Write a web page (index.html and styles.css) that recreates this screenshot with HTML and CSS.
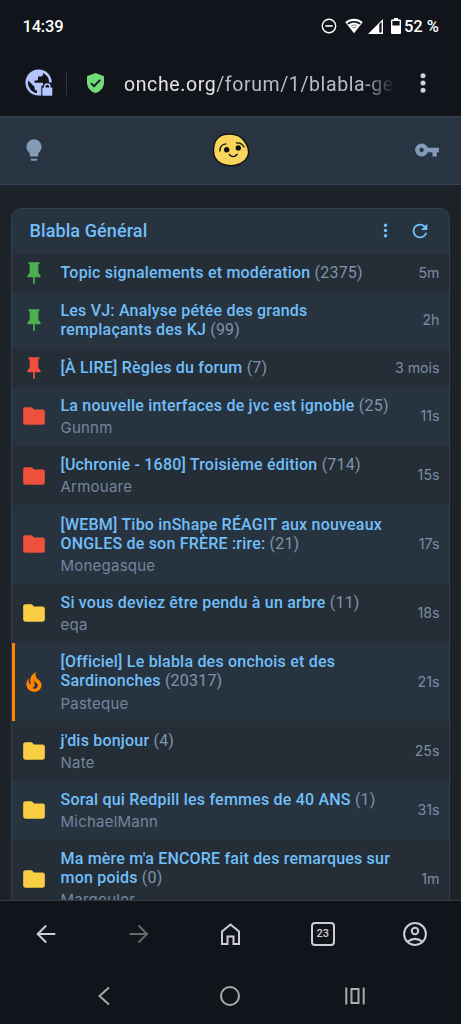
FILE: index.html
```
<!DOCTYPE html>
<html lang="fr">
<head>
<meta charset="utf-8">
<title>Blabla Général</title>
<link rel="stylesheet" href="styles.css">
</head>
<body>
<svg class="defs" width="0" height="0" aria-hidden="true">
  <symbol id="pin" viewBox="0 0 24 24"><path d="M16,12V4H17V2H7V4H8V12L6,14V16H11.2V22H12.8V16H18V14L16,12Z"/></symbol>
  <symbol id="folder" viewBox="0 0 24 24"><path d="M10,4H4C2.89,4 2,4.89 2,6V18A2,2 0 0,0 4,20H20A2,2 0 0,0 22,18V8C22,6.89 21.1,6 20,6H12L10,4Z"/></symbol>
  <symbol id="fire" viewBox="0 0 24 24"><path d="M17.66 11.2C17.43 10.9 17.15 10.64 16.89 10.38C16.22 9.78 15.46 9.35 14.82 8.72C13.33 7.26 13 4.85 13.95 3C13 3.23 12.17 3.75 11.46 4.32C8.87 6.4 7.85 10.07 9.07 13.22C9.11 13.32 9.15 13.42 9.15 13.55C9.15 13.77 9 13.97 8.8 14.05C8.57 14.15 8.33 14.09 8.14 13.93C8.08 13.88 8.04 13.83 8 13.76C6.87 12.33 6.69 10.28 7.45 8.64C5.78 10 4.87 12.3 5 14.47C5.06 14.97 5.12 15.47 5.29 15.97C5.43 16.57 5.7 17.17 6 17.7C7.08 19.43 8.95 20.67 10.96 20.92C13.1 21.19 15.39 20.8 17.03 19.32C18.86 17.66 19.5 15 18.56 12.72L18.43 12.46C18.22 12 17.66 11.2 17.66 11.2M14.5 17.5C14.22 17.74 13.76 18 13.4 18.1C12.28 18.5 11.16 17.94 10.5 17.28C11.69 17 12.4 16.12 12.61 15.23C12.78 14.43 12.46 13.77 12.33 13C12.21 12.26 12.23 11.63 12.5 10.94C12.69 11.32 12.89 11.7 13.13 12C13.9 13 15.11 13.44 15.37 14.8C15.41 14.94 15.43 15.08 15.43 15.23C15.46 16.05 15.1 16.95 14.5 17.5Z"/></symbol>
</svg>

<header class="status">
  <span class="clock">14:39</span>
  <span class="status-icons">
    <svg class="dnd" viewBox="0 0 16 16"><circle cx="8" cy="8" r="6.7" fill="none" stroke="#fff" stroke-width="1.4"/><path d="M4.3 8h7.4" stroke="#fff" stroke-width="1.6"/></svg>
    <svg class="wifi" viewBox="0 0 18 16"><path d="M0.2 4.1C5.3-.5 12.700-.5 17.800 4.100L9 15.200Z" fill="#fff"/><path d="M2.200 5C6 2.200 12 2.200 15.800 5L14.600 6.400C11 4.100 7 4.100 3.400 6.400Z" fill="#11141b"/><path d="M6 7.800Q9 6 12 7.800M7 9.600h4" stroke="#888" fill="none"/></svg>
    <svg class="signal" viewBox="0 0 15 15"><path d="M15 0V15H0Z" fill="#fff"/><path d="M11.300 5V13.600H13.600V3Z" fill="#11141b"/></svg>
    <svg class="battery" viewBox="0 0 10 16"><path d="M3 0h4v1.500h2q1 0 1 1V15q0 1-1 1H1q-1 0-1-1V2.500q0-1 1-1h2Z" fill="#fff"/><path d="M1.400 3h7.200v4.500H1.400Z" fill="#11141b"/></svg>
  </span>
  <span class="percent">52 %</span>
</header>

<div class="urlbar">
  <svg class="globe" viewBox="0 0 28 28"><path fill="#b4c5ff" fill-rule="evenodd" d="M13.500.5A13 13 0 0 1 26.800 13.500H24.200A11 11 0 0 0 18 4.100V5Q18 7.500 15.500 7.500H13V10.200Q13 11.400 11.800 11.400H9.500V13.800H17Q18.200 13.800 18.200 15V16.500H16.500V26.600H13.500A13.050 13.050 0 0 1 13.500.5ZM3.200 11.500A11 11 0 0 0 12 24.300V21.500Q9.500 21.500 9.500 19V17.800Z"/><path fill="#b4c5ff" stroke="#11141b" stroke-width="1.600" paint-order="stroke" d="M18 18.500h1V17.600a3.300 3.300 0 0 1 6.600 0v.9h1q.7 0 .7.7v6.800q0 .8-.7.800H18q-.7 0-.7-.8v-6.800q0-.7.7-.7Zm2.500 0h3.600v-.9a1.800 1.800 0 0 0-3.600 0Z" fill-rule="evenodd"/></svg>
  <span class="divider"></span>
  <svg class="shield" viewBox="0 0 17 20"><path d="M8.500 0L16 2.700Q17 3 17 4V9.500C17 15 13 18.800 8.500 20C4 18.800 0 15 0 9.500V4Q0 3 1 2.700Z" fill="#6fdc78"/><path d="M4 10.200L7 13.200L13.200 6.800" fill="none" stroke="#11141b" stroke-width="1.800"/></svg>
  <span class="url"><b>onche.org</b>/forum/1/blabla-gen</span>
  <svg class="menu" viewBox="0 0 6 20"><g fill="#d2d2dc"><circle cx="3" cy="2.700" r="2.500"/><circle cx="3" cy="10" r="2.500"/><circle cx="3" cy="17.300" r="2.500"/></g></svg>
</div>

<main class="page">
  <nav class="topbar">
    <svg class="topicon" viewBox="0 0 24 24"><path d="M12,2A7,7 0 0,0 5,9C5,11.380 6.190,13.470 8,14.740V17A1,1 0 0,0 9,18H15A1,1 0 0,0 16,17V14.740C17.810,13.470 19,11.380 19,9A7,7 0 0,0 12,2M9,21A1,1 0 0,0 10,22H14A1,1 0 0,0 15,21V20H9V21Z"/></svg>
    <svg class="smiley" viewBox="0 0 38 34"><path d="M1.500 18C1.500 8.500 6 2.200 14 1.300C21 .5 28 2 32 7.500C35 11.500 37 15 36.500 20C36 26.500 29 31.500 23.500 32.300C18 33 14 32.500 10 31C4.500 28.500 1.500 24 1.500 18Z" fill="#f8d55b" stroke="#111" stroke-width="1.400"/><g fill="none" stroke="#111" stroke-width="1.300" stroke-linecap="round"><path d="M7.800 18Q8 11.200 14 10.800M24.500 10Q29.500 9.500 32 14M17.300 21.500Q21 26 25.300 21.300"/></g><circle cx="14.700" cy="16.800" r="2.700" fill="#111"/><circle cx="26.300" cy="14.900" r="2.700" fill="#111"/></svg>
    <svg class="topicon" viewBox="0 0 24 24"><path d="M7,14A2,2 0 0,1 5,12A2,2 0 0,1 7,10A2,2 0 0,1 9,12A2,2 0 0,1 7,14M12.650,10C11.830,7.670 9.610,6 7,6A6,6 0 0,0 1,12A6,6 0 0,0 7,18C9.610,18 11.830,16.330 12.650,14H17V18H21V14H23V10H12.650Z"/></svg>
  </nav>

  <section class="card">
    <div class="card-head">
      <h1>Blabla Général</h1>
      <svg class="dots" viewBox="0 0 24 24"><path d="M12,16A2,2 0 0,1 14,18A2,2 0 0,1 12,20A2,2 0 0,1 10,18A2,2 0 0,1 12,16M12,10A2,2 0 0,1 14,12A2,2 0 0,1 12,14A2,2 0 0,1 10,12A2,2 0 0,1 12,10M12,4A2,2 0 0,1 14,6A2,2 0 0,1 12,8A2,2 0 0,1 10,6A2,2 0 0,1 12,4Z"/></svg>
      <svg class="refresh" viewBox="0 0 24 24"><path d="M17.650,6.350C16.200,4.900 14.210,4 12,4A8,8 0 0,0 4,12A8,8 0 0,0 12,20C15.730,20 18.840,17.450 19.730,14H17.650C16.830,16.330 14.610,18 12,18A6,6 0 0,1 6,12A6,6 0 0,1 12,6C13.660,6 15.140,6.690 16.220,7.780L13,11H20V4L17.650,6.350Z"/></svg>
    </div>
    <div class="topic"><svg class="icon green"><use href="#pin"/></svg><div class="body"><div class="title">Topic signalements et modération <i>(2375)</i></div></div><time>5m</time></div>
    <div class="topic"><svg class="icon green"><use href="#pin"/></svg><div class="body"><div class="title">Les VJ: Analyse pétée des grands<br>remplaçants des KJ <i>(99)</i></div></div><time>2h</time></div>
    <div class="topic"><svg class="icon red"><use href="#pin"/></svg><div class="body"><div class="title">[À LIRE] Règles du forum <i>(7)</i></div></div><time>3 mois</time></div>
    <div class="topic"><svg class="icon red"><use href="#folder"/></svg><div class="body"><div class="title">La nouvelle interfaces de jvc est ignoble <i>(25)</i></div><div class="author">Gunnm</div></div><time>11s</time></div>
    <div class="topic"><svg class="icon red"><use href="#folder"/></svg><div class="body"><div class="title">[Uchronie - 1680] Troisième édition <i>(714)</i></div><div class="author">Armouare</div></div><time>15s</time></div>
    <div class="topic"><svg class="icon red"><use href="#folder"/></svg><div class="body"><div class="title">[WEBM] Tibo inShape RÉAGIT aux nouveaux<br>ONGLES de son FRÈRE :rire: <i>(21)</i></div><div class="author">Monegasque</div></div><time>17s</time></div>
    <div class="topic"><svg class="icon yellow"><use href="#folder"/></svg><div class="body"><div class="title">Si vous deviez être pendu à un arbre <i>(11)</i></div><div class="author">eqa</div></div><time>18s</time></div>
    <div class="topic hot"><svg class="icon orange"><use href="#fire"/></svg><div class="body"><div class="title">[Officiel] Le blabla des onchois et des<br>Sardinonches <i>(20317)</i></div><div class="author">Pasteque</div></div><time>21s</time></div>
    <div class="topic"><svg class="icon yellow"><use href="#folder"/></svg><div class="body"><div class="title">j'dis bonjour <i>(4)</i></div><div class="author">Nate</div></div><time>25s</time></div>
    <div class="topic"><svg class="icon yellow"><use href="#folder"/></svg><div class="body"><div class="title">Soral qui Redpill les femmes de 40 ANS <i>(1)</i></div><div class="author">MichaelMann</div></div><time>31s</time></div>
    <div class="topic"><svg class="icon yellow"><use href="#folder"/></svg><div class="body"><div class="title">Ma mère m'a ENCORE fait des remarques sur<br>mon poids <i>(0)</i></div><div class="author">Margouler</div></div><time>1m</time></div>
  </section>
</main>

<footer class="bottom">
  <div class="tools">
    <svg viewBox="0 0 28 28"><path d="M23.300 14H5.500M14.200 5.500L5.700 14L14.200 22.500"/></svg>
    <svg class="dim" viewBox="0 0 28 28"><path d="M5.500 14H23M14.500 5.500L23 14L14.500 22.500"/></svg>
    <svg viewBox="0 0 28 28"><path d="M5 24V11.500L13.500 4.500L22 11.500V24H16.500V16.500H10.500V24Z"/></svg>
    <span class="tabs">23</span>
    <svg viewBox="0 0 28 28"><circle cx="14" cy="14" r="10.900"/><circle cx="14" cy="11" r="3.200"/><path d="M6.500 21.800Q14 16 21.500 21.800"/></svg>
  </div>
  <div class="system">
    <svg viewBox="0 0 24 24"><path d="M17 3.500L7.500 12L17 20.500"/></svg>
    <svg viewBox="0 0 24 24"><circle cx="12" cy="12" r="9"/></svg>
    <svg viewBox="0 0 24 24"><path d="M3.300 3.500V20.500M20.700 3.500V20.500M8.500 5H15.500V19H8.500Z"/></svg>
  </div>
</footer>
</body>
</html>
```

FILE: styles.css
```
* { box-sizing: border-box; }
body {
  margin: 0;
  height: 1024px;
  overflow: hidden;
  display: flex;
  flex-direction: column;
  background: #11141b;
  font-family: Roboto, sans-serif;
  white-space: nowrap;
}
svg { display: block; flex: none; }
.defs { position: absolute; }

.status {
  height: 52px;
  flex: none;
  display: flex;
  align-items: center;
  padding: 0 22px 0 22.500px;
  color: #fff;
  font-size: 16.500px;
  font-weight: 500;
}
.clock { flex: 1; letter-spacing: -0.200px; }
.status-icons { display: flex; align-items: center; margin-right: 2.500px; }
.dnd { width: 16px; height: 16px; margin-right: 7.500px; }
.wifi { width: 18px; height: 16px; margin-right: 5.500px; }
.signal { width: 15px; height: 15px; margin-right: 8px; }
.battery { width: 10px; height: 16px; }

.urlbar {
  height: 64px;
  flex: none;
  display: flex;
  align-items: center;
  padding: 0 35.500px 2px 24.500px;
}
.globe { width: 28px; height: 28px; margin-right: 13.500px; }
.divider { width: 1px; height: 24px; background: #34373e; margin-right: 20px; }
.shield { width: 17px; height: 20px; margin-right: 20px; }
.url {
  width: 271px;
  padding-top: 2px;
  overflow: hidden;
  color: #bdbdc7;
  font-size: 19.500px;
  letter-spacing: 0.600px;
  -webkit-mask-image: linear-gradient(to right, #000 240px, transparent 271px);
  mask-image: linear-gradient(to right, #000 240px, transparent 271px);
}
.url b { color: #e4e1e9; font-weight: 400; }
.menu { width: 6px; height: 20px; margin-left: auto; }

.page { flex: 1; min-height: 0; overflow: hidden; background: #1c2228; }
.topbar {
  height: 69px;
  display: flex;
  align-items: center;
  justify-content: space-between;
  padding: 0 21px 2px;
  background: #283442;
  border-top: 2px solid #353f48;
  border-bottom: 1px solid #34465a;
}
.topicon { width: 26px; height: 26px; fill: #849bb7; }
.smiley { width: 38px; height: 34px; }

.card {
  margin: 23px 11px 0;
  border: 1px solid #304050;
  border-radius: 10px;
  overflow: hidden;
  background: #252e37;
}
.card-head {
  height: 45px;
  display: flex;
  align-items: center;
  padding: 0 18px 2px 17.500px;
  background: #283340;
  color: #70bff9;
}
.card-head svg { fill: #70bff9; }
.card-head h1 { margin: 0; flex: 1; font-size: 18px; font-weight: 500; letter-spacing: 0.100px; }
.dots { width: 21px; height: 21px; margin-right: 13px; }
.refresh { width: 22px; height: 22px; }

.topic {
  display: flex;
  align-items: center;
  padding: 9.400px 9.500px 9.400px 9px;
}
.topic:nth-child(odd) { background: #283340; }
.hot { box-shadow: inset 3px 0 #ff8500; }
.icon { width: 26px; height: 26px; margin: -4px 13.500px -4px 0; }
.green { fill: #4caf50; }
.red { fill: #ef503c; }
.yellow { fill: #f9ce45; }
.orange { fill: #ff8400; }
.body { flex: 1; min-width: 0; }
.title {
  color: #70bff9;
  font-size: 16px;
  font-weight: 500;
  line-height: 19.100px;
  letter-spacing: 0.200px;
}
.title i { font-style: normal; font-weight: 400; color: #8093a9; }
.author {
  padding-top: 4px;
  font-family: Inter, sans-serif;
  font-size: 15px;
  line-height: 17.400px;
  letter-spacing: 0.230px;
  color: #73869d;
}
.topic time {
  padding-bottom: 1.500px;
  font-family: Inter, sans-serif;
  font-size: 14.200px;
  color: #7b8da4;
}

.bottom { height: 124px; flex: none; border-top: 1px solid #353a40; }
.tools, .system { display: flex; align-items: center; justify-content: space-between; }
.tools { height: 65px; padding: 0 32px; }
.tools svg, .system svg { fill: none; stroke: #cdcbd6; stroke-width: 2; }
.tools svg { width: 28px; height: 28px; }
.tools svg.dim { stroke: #66676d; }
.tabs {
  width: 24px;
  height: 24px;
  margin: 0 2px;
  border: 2px solid #cdcbd6;
  border-radius: 4px;
  color: #cdcbd6;
  font-size: 11px;
  font-weight: 500;
  line-height: 20px;
  text-align: center;
}
.system { height: 60px; padding: 0 94px 0 92px; }
.system svg { width: 24px; height: 24px; stroke: #aaa; }
```
